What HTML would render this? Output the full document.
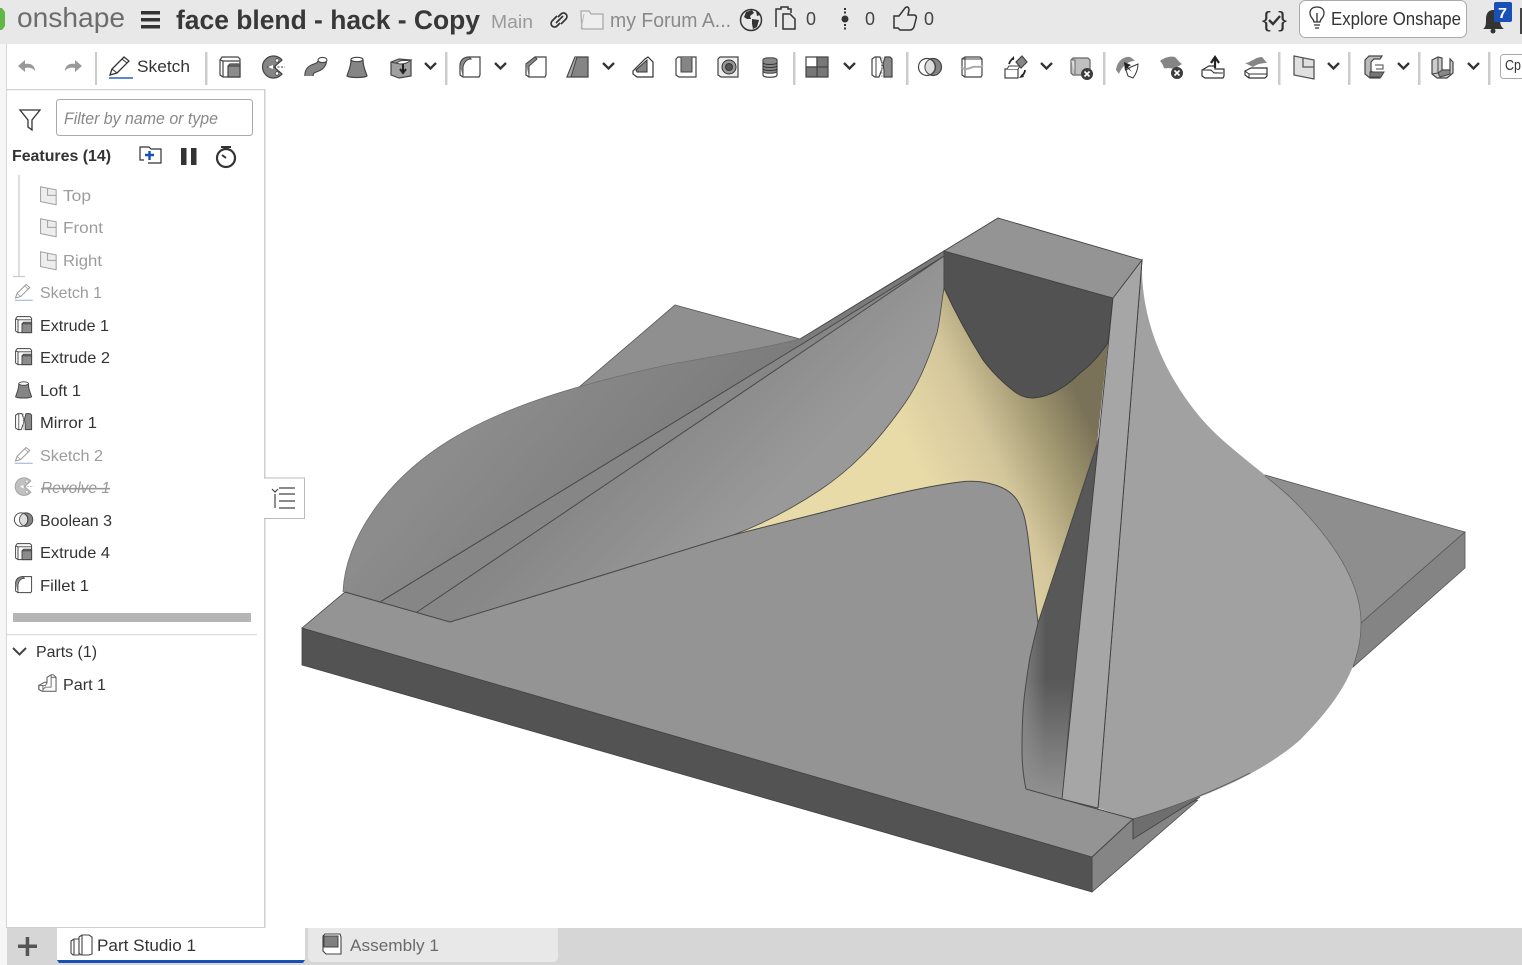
<!DOCTYPE html>
<html><head><meta charset="utf-8"><title>face blend - hack - Copy</title>
<style>
html,body{margin:0;padding:0;background:#fff;width:1522px;height:965px;overflow:hidden}
svg{display:block}
text{font-family:"Liberation Sans",sans-serif;fill:#333}
.t{font-size:16px}
.d{fill:#9c9c9c}
</style></head><body>
<svg width="1522" height="965" viewBox="0 0 1522 965" xmlns="http://www.w3.org/2000/svg">
<defs>
<linearGradient id="yl" gradientUnits="userSpaceOnUse" x1="925" y1="480" x2="1082" y2="405"><stop offset="0" stop-color="#e8dba8"/><stop offset=".42" stop-color="#d3c69b"/><stop offset=".75" stop-color="#a0966f"/><stop offset="1" stop-color="#7a7258"/></linearGradient>
<linearGradient id="ld" gradientUnits="userSpaceOnUse" x1="480" y1="420" x2="640" y2="560"><stop offset="0" stop-color="#8c8c8c"/><stop offset="1" stop-color="#7a7a7a"/></linearGradient>
<linearGradient id="li" gradientUnits="userSpaceOnUse" x1="640" y1="430" x2="740" y2="530"><stop offset="0" stop-color="#878787"/><stop offset="1" stop-color="#999"/></linearGradient>
<linearGradient id="wd" gradientUnits="userSpaceOnUse" x1="1022" y1="0" x2="1046" y2="0"><stop offset="0" stop-color="#808080"/><stop offset="1" stop-color="#585858"/></linearGradient>
<linearGradient id="wd2" gradientUnits="userSpaceOnUse" x1="1050" y1="680" x2="1050" y2="795"><stop offset="0" stop-color="#909090" stop-opacity="0"/><stop offset="1" stop-color="#909090"/></linearGradient>
<g id="ext" fill="#fff" stroke="#444" stroke-width="1.2"><path d="M2 5l2-3h16l2 2v18H5l-3-2z"/><path d="M5 22V6L2 5M5 6h17" fill="none"/><path d="M10 11l2-2h10v13H10z" fill="#8c8c8c"/><path d="M10 11h12" fill="none"/></g>
<g id="rev"><path d="M21 5a11 11 0 1 0 0 14l-8-7z" fill="#858585" stroke="#444" stroke-width="1.200"/><circle cx="16" cy="5.500" r="1.800" fill="#fff" stroke="#444" stroke-width=".8"/><circle cx="16" cy="18.500" r="1.800" fill="#fff" stroke="#444" stroke-width=".8"/><path d="M6 12h18" stroke="#444" stroke-width="1" stroke-dasharray="2 1.500"/><path d="M7 12l5-2v4z" fill="#fff"/></g>
<g id="swp"><path d="M5 21C5 10 16 16 18.500 6" fill="none" stroke="#444" stroke-width="9.500"/><path d="M5 21C5 10 16 16 18.500 6" fill="none" stroke="#858585" stroke-width="7.300"/><ellipse cx="18.500" cy="5" rx="4.500" ry="2.600" fill="#fff" stroke="#444" stroke-width="1.100"/></g>
<g id="lof"><path d="M6 5C6 12 3 17 2 21c3 2 17 2 20 0-1-4-4-9-4-16z" fill="#858585" stroke="#444" stroke-width="1.200"/><ellipse cx="12" cy="4.500" rx="6" ry="2.200" fill="#fff" stroke="#444" stroke-width="1.100"/></g>
<g id="thk"><path d="M2 7l8-3 12 1v16l-12 2-8-3z" fill="#a0a0a0" stroke="#444" stroke-width="1.200"/><path d="M2 7c5 2 7 0 9-1 3-1 7 0 11-1-3 3-6 4-11 4z" fill="#fff" stroke="#444"/><path d="M14 9v8m-3-3l3 4 3-4" stroke="#222" stroke-width="2" fill="none"/></g>
<g id="fil"><path d="M2 11c0-6 4-9 9-9h11v18l-1 2H5l-3-2z" fill="#fff" stroke="#444" stroke-width="1.200"/><path d="M2 11c0-6 4-9 9-9l2 2c-4 0-7 3-8 8v10" fill="#8c8c8c" stroke="#444"/></g>
<g id="chm"><path d="M2 9l9-7h11v18l-1 2H5l-3-2z" fill="#fff" stroke="#444" stroke-width="1.200"/><path d="M2 9l9-7 2 2-8 7v11" fill="#8c8c8c" stroke="#444"/></g>
<g id="drf"><path d="M9 2h13v20H1z" fill="#858585" stroke="#444" stroke-width="1.200"/><path d="M9 2L1 22l4 0L11 2" fill="#aaa" stroke="#444"/></g>
<g id="rib"><path d="M2 16l12-12 3-2 5 5v15H6l-4-3z" fill="#fff" stroke="#333" stroke-width="1.200"/><path d="M5 15L16 5v12H6z" fill="#858585" stroke="#333"/></g>
<g id="shl"><path d="M2 4l2-2h18v20H5l-3-2z" fill="#fff" stroke="#444" stroke-width="1.200"/><path d="M7 2v15h11V2" fill="#858585" stroke="#444"/></g>
<g id="hol"><path d="M2 4l2-2h18v20H5l-3-2z" fill="#eee" stroke="#444" stroke-width="1.200"/><circle cx="13" cy="12" r="7" fill="#999" stroke="#333"/><circle cx="13" cy="12" r="3.500" fill="#555" stroke="#333"/></g>
<g id="thr"><path d="M5 5v15c0 3 14 3 14 0V5z" fill="#fff" stroke="#444" stroke-width="1.200"/><path d="M5 5c0-3 14-3 14 0v11c0 3-14 3-14 0z" fill="#888" stroke="#444"/><path d="M5 8c2 2 12 2 14 0M5 11c2 2 12 2 14 0M5 14c2 2 12 2 14 0" stroke="#333" fill="none"/></g>
<g id="pat"><path d="M1 2h11v10H1z" fill="#fff" stroke="#444" stroke-width="1.200"/><path d="M12 2h11v10H12zM1 12h11v10H1zM12 12h11v10H12z" fill="#777" stroke="#444" stroke-width="1.200"/></g>
<g id="mir"><path d="M2 4l3-2h5l2 6v6l-3 8H5l-3-2z" fill="#fff" stroke="#444" stroke-width="1.200"/><path d="M13 9l2-7h5l2 2v18h-8v-7z" fill="#8a8a8a" stroke="#444" stroke-width="1.200"/><path d="M12 2v20" stroke="#aaa" stroke-dasharray="2 1"/><path d="M6 2v20" stroke="#444" fill="none"/></g>
<g id="bol"><circle cx="15" cy="12" r="8.500" fill="#858585" stroke="#444" stroke-width="1.200"/><circle cx="9" cy="12" r="8.500" fill="#fff" stroke="#444" stroke-width="1.200"/><path d="M12 4.200a8.500 8.500 0 0 1 0 15.600a8.500 8.500 0 0 1 0-15.600z" fill="#ddd" stroke="#444"/></g>
<g id="spl"><path d="M2 4l3-2h15l2 2v16l-1 2H5l-3-2z" fill="#fff" stroke="#444" stroke-width="1.200"/><path d="M5 2v20M2 4h20" stroke="#444" fill="none"/><path d="M1 12c5 4 8 1 12 0 3-1 6 1 10-1" stroke="#aaa" stroke-width="2" fill="none"/></g>
<g id="trf"><path d="M2 14h13v9H2z" fill="#fff" stroke="#444" stroke-width="1.200"/><path d="M4 14l2-3h11l-2 3" fill="#fff" stroke="#444"/><path d="M13 7l6-6 5 6-6 6z" fill="#858585" stroke="#444" stroke-width="1.200"/><path d="M6 9c1-3 3-5 5-6M22 15c0 3-2 5-4 7" stroke="#222" stroke-width="1.800" fill="none"/><path d="M11 1l0 4-3-1zM16 23l5-1-2-3z" fill="#222"/></g>
<g id="del"><path d="M2 4l2-2h15l2 2v15H4l-2-2z" fill="#c0c0c0" stroke="#666" stroke-width="1.200"/><path d="M2 4h4v14" fill="#ddd" stroke="#666"/><circle cx="18" cy="18" r="6" fill="#3c3c3c"/><path d="M15.500 15.500l5 5m0-5l-5 5" stroke="#fff" stroke-width="1.600"/></g>
<g id="mvf"><path d="M1 15C2 6 9 1 15 2c2 1 4 3 5 4-7 0-13 5-16 13z" fill="#8a8a8a"/><path d="M13 21l-2-6 5-3 7-3c0 5-2 10-5 14z" fill="#fff" stroke="#333"/><path d="M9 7l1 9 2-3 5 4-4-5 3-2z" fill="#222"/></g>
<g id="dlf"><path d="M1 6c5-4 11-5 15-4 2 2 4 5 7 7l-8 5C10 12 6 14 5 13 4 10 3 8 1 6z" fill="#858585"/><circle cx="18" cy="18" r="6" fill="#3c3c3c"/><path d="M15.500 15.500l5 5m0-5l-5 5" stroke="#fff" stroke-width="1.600"/></g>
<g id="rpl"><path d="M1 15l7-4h6v3h9v7l-1 2H4l-3-2z" fill="#fff" stroke="#333" stroke-width="1.200"/><path d="M2 15h8l3 3h9" stroke="#333" fill="#bbb"/><path d="M14 13V4m-4 4l4-6 4 6" stroke="#222" stroke-width="2.200" fill="none"/></g>
<g id="ofs"><path d="M1 8c4 0 5-2 8-3 3-2 6-3 9-3l5 6c-5 0-10 1-14 4z" fill="#858585"/><path d="M1 16l6-3h16v8l-2 2H5l-4-3z" fill="#fff" stroke="#333" stroke-width="1.200"/><path d="M1 16l4 3h18M5 19v4" stroke="#333" fill="none"/></g>
<g id="pln"><path d="M2 1l20 4v19L2 20z" fill="#e0e0e0" stroke="#555" stroke-width="1.300"/><path d="M11 3v9h11" stroke="#555" stroke-width="1.300" fill="none"/></g>
<g id="cs"><path d="M4 5l4-4h13l-2 3h-6l-3 3v9l3 2h8l-2 5H9l-5-4z" fill="#bbb" stroke="#444" stroke-width="1.200"/><path d="M14 10h8v4h-7" fill="#fff" stroke="#444"/><path d="M9 22v-5h14l-3 5z" fill="#777" stroke="#444"/></g>
<g id="shm"><path d="M2 5l6-3 4 1v12h8V4l3 3v11l-6 5H7l-5-4z" fill="#ccc" stroke="#444" stroke-width="1.200"/><path d="M8 2v16l-6 1M8 18h12" stroke="#444" fill="none"/><path d="M12 15l-4 3 2 4 10-3v-4z" fill="#888" stroke="#444"/></g>
<g id="prt"><path d="M1 14l7-4h3V4l5-3h3l3 3v17H5l-4-2z" fill="#fff" stroke="#555" stroke-width="1.200"/><path d="M1 14h8l2-3V4M16 1v3h6M16 4v12H9l-3 3M1 14v5M6 14v7" stroke="#555" fill="none"/></g>
<g id="skt"><path d="M1 23h24" stroke="#2a62bd" stroke-width="1.400"/><path d="M2 20l2-6L16 2l5 4-12 12z" fill="#fff" stroke="#333" stroke-width="1.300"/><path d="M14 4l5 4M4 14l5 4" stroke="#333" fill="none"/></g>
<path id="chv" d="M0 0l5.500 5.500L11 0" fill="none" stroke="#333" stroke-width="2.300"/>
</defs>

<!-- header -->
<rect x="0" y="0" width="1522" height="44" fill="#e8e8e8"/>
<path d="M0 8h2l3 4v14l-3 4H0z" fill="#62b746"/>
<text x="17" y="27" font-size="28" textLength="108" lengthAdjust="spacingAndGlyphs" style="fill:#6d6d6d">onshape</text>
<path d="M141 11h19v3.500h-19zM141 18h19v3.500h-19zM141 25h19v3.500h-19z" fill="#333"/>
<text x="176" y="29" font-size="27" font-weight="700" textLength="304" lengthAdjust="spacingAndGlyphs" style="fill:#383838">face blend - hack - Copy</text>
<text x="491" y="28" font-size="18" textLength="42" lengthAdjust="spacingAndGlyphs" style="fill:#9a9a9a">Main</text>
<g fill="none" stroke="#333" stroke-width="1.700"><path d="M557 16l-5 5c-3 4 2 8 5 5l3-3"/><path d="M561 24l5-5c3-4-2-8-5-5l-3 3"/><path d="M556 23l7-7"/></g>
<path d="M581 14v-3h8l2 3h12v15h-21z" fill="#eee" stroke="#aaa" stroke-width="1.300"/>
<path d="M581 29l3-15" stroke="#bbb" fill="none"/>
<text x="610" y="27" font-size="20" textLength="121" lengthAdjust="spacingAndGlyphs" style="fill:#8a8a8a">my Forum A...</text>
<circle cx="751" cy="20" r="10.500" fill="#e8e8e8" stroke="#333" stroke-width="1.500"/>
<path d="M746 12l6-2 2 3-4 3 1 3-4 0-3-2zM752 19l7 1-2 7-4 2-1-5zM756 11l4 4-3 1z" fill="#333"/>
<path d="M776 27V9h5l0-2h7v2h3l0 4" fill="none" stroke="#333" stroke-width="1.500"/>
<path d="M783 14h7l5 5v10h-12z" fill="#e8e8e8" stroke="#333" stroke-width="1.500"/>
<text x="806" y="25" font-size="18" textLength="10" lengthAdjust="spacingAndGlyphs" style="fill:#444">0</text>
<circle cx="845" cy="19" r="3.500" fill="#333"/>
<path d="M845 8v6M845 24v6" stroke="#333" stroke-width="2" stroke-dasharray="2 1.500"/>
<text x="865" y="25" font-size="18" textLength="10" lengthAdjust="spacingAndGlyphs" style="fill:#444">0</text>
<path d="M894 28V16h5l6-8c2-2 4-1 4 2l-1 5h6c2 0 3 2 2 4l-2 8c-1 2-2 3-4 3h-10l-2-2z" fill="none" stroke="#333" stroke-width="1.500"/>
<text x="924" y="25" font-size="18" textLength="10" lengthAdjust="spacingAndGlyphs" style="fill:#444">0</text>
<text x="1262" y="27" font-size="22" textLength="25" lengthAdjust="spacingAndGlyphs" style="fill:#333">{&#160;}</text>
<path d="M1269 20l4 4 7-8" fill="none" stroke="#333" stroke-width="2.400"/>
<rect x="1299.500" y="0.500" width="167" height="37" rx="6" fill="#fff" stroke="#aaa"/>
<path d="M1314 22c0-3-4-4-4-9 0-4 3-6 7-6s7 2 7 6c0 5-4 6-4 9zM1314 25h6M1315 28h4M1317 22v-9" fill="none" stroke="#333" stroke-width="1.300"/>
<text x="1331" y="25" font-size="18" textLength="130" lengthAdjust="spacingAndGlyphs" style="fill:#333">Explore Onshape</text>
<path d="M1483 29c3-2 3-5 3-10 0-6 3-9 7-9s7 3 7 9c0 5 1 8 4 10z" fill="#333"/><circle cx="1493" cy="31" r="2.500" fill="#333"/>
<rect x="1494" y="2" width="18" height="20" rx="2" fill="#1a50b5"/>
<text x="1498" y="18" font-size="15" font-weight="700" textLength="9" lengthAdjust="spacingAndGlyphs" style="fill:#fff">7</text>
<rect x="1520" y="8" width="2" height="26" fill="#444"/>

<!-- left strip -->
<rect x="0" y="44" width="6" height="884" fill="#f6f6f6"/>
<rect x="6" y="44" width="1" height="884" fill="#d5d5d5"/>

<!-- toolbar -->
<path d="M35 71c0-6-5-8-10-7v-4l-7 6 7 6v-4c4-1 8 0 10 3z" fill="#999"/>
<path d="M65 71c0-6 5-8 10-7v-4l7 6-7 6v-4c-4-1-8 0-10 3z" fill="#999"/>
<g fill="#ccc"><rect x="95" y="52" width="2" height="33"/><rect x="205" y="52" width="2.500" height="33"/><rect x="445" y="52" width="2.500" height="33"/><rect x="793" y="52" width="2.500" height="33"/><rect x="906" y="52" width="2.500" height="33"/><rect x="1103" y="52" width="2.500" height="33"/><rect x="1278" y="52" width="2.500" height="33"/><rect x="1348" y="52" width="2.500" height="33"/><rect x="1418" y="52" width="2.500" height="33"/><rect x="1488" y="52" width="2.500" height="33"/></g>
<use href="#skt" transform="translate(108 55)"/>
<text x="137" y="72" font-size="17" textLength="53" lengthAdjust="spacingAndGlyphs">Sketch</text>
<use href="#ext" transform="translate(218 55)"/>
<use href="#rev" transform="translate(261 55)"/>
<use href="#swp" transform="translate(304 55)"/>
<use href="#lof" transform="translate(345 55)"/>
<use href="#thk" transform="translate(389 55)"/>
<use href="#chv" transform="translate(425 63)"/>
<use href="#fil" transform="translate(458 55)"/>
<use href="#chv" transform="translate(495 63)"/>
<use href="#chm" transform="translate(524 55)"/>
<use href="#drf" transform="translate(566 55)"/>
<use href="#chv" transform="translate(603 63)"/>
<use href="#rib" transform="translate(631 55)"/>
<use href="#shl" transform="translate(674 55)"/>
<use href="#hol" transform="translate(716 55)"/>
<use href="#thr" transform="translate(758 55)"/>
<use href="#pat" transform="translate(805 55)"/>
<use href="#chv" transform="translate(844 63)"/>
<use href="#mir" transform="translate(870 55)"/>
<use href="#bol" transform="translate(918 55)"/>
<use href="#spl" transform="translate(960 55)"/>
<use href="#trf" transform="translate(1003 55)"/>
<use href="#chv" transform="translate(1041 63)"/>
<use href="#del" transform="translate(1069 56)"/>
<use href="#mvf" transform="translate(1115 55)"/>
<use href="#dlf" transform="translate(1159 55)"/>
<use href="#rpl" transform="translate(1201 55)"/>
<use href="#ofs" transform="translate(1244 55)"/>
<use href="#pln" transform="translate(1292 55)"/>
<use href="#chv" transform="translate(1328 63)"/>
<use href="#cs" transform="translate(1361 55)"/>
<use href="#chv" transform="translate(1398 63)"/>
<use href="#shm" transform="translate(1430 55)"/>
<use href="#chv" transform="translate(1468 63)"/>
<rect x="1500.500" y="54.500" width="30" height="24" rx="3" fill="#fff" stroke="#aaa"/>
<text x="1505" y="70" font-size="15" textLength="16" lengthAdjust="spacingAndGlyphs">Cp</text>

<!-- 3D model -->
<path d="M675 305L800 339 900 400 600 420 578 388z" fill="#8f8f8f" stroke="#555" stroke-width=".8"/>
<path d="M1265 475L1465 532 1361 623 1300 560z" fill="#8e8e8e" stroke="#555" stroke-width=".8"/>
<path d="M1361 623L1465 532V568L1353 667z" fill="#848484" stroke="#555" stroke-width=".8"/>
<path d="M1198 800L1092 892V857L1133 819z" fill="#858585" stroke="#4a4a4a" stroke-width=".8"/>
<path d="M1133 819L1200 797 1133 839z" fill="#6e6e6e" stroke="#444" stroke-width=".8"/>
<path d="M302 628L1092 857V892L302 665z" fill="#535353" stroke="#444" stroke-width=".8"/>
<path d="M302 628L345 592 450 622 733 535 1038 623 1022 750 1026 789 1133 819 1092 857z" fill="#949494" stroke="#444" stroke-width=".8"/>
<path d="M733 535L820 513C870 500 920 487 960 482C975 480 1005 482 1017 500C1025 512 1026 525 1028 537L1038 623 1000 640 800 600z" fill="#949494"/>
<!-- left dome -->
<path d="M343 592C345 540 385 480 450 440C510 403 590 382 667 365C710 357 755 350 800 339L944 251V288C941 306 940 320 937 333C925 370 915 390 900 410C875 445 850 470 820 490C790 510 760 525 733 535L450 622 345 592z" fill="url(#ld)"/>
<path d="M380 602L820 333 944 256 820 340 417 612z" fill="#868686"/>
<path d="M417 612L820 340 944 256V288C941 306 940 320 937 333C925 370 915 390 900 410C875 445 850 470 820 490C790 510 760 525 733 535L450 622z" fill="url(#li)"/>
<!-- yellow & dark -->
<path d="M944 288C941 306 940 320 937 333C925 370 915 390 900 410C875 445 850 470 820 490C790 510 760 525 733 535L820 513C870 500 920 487 960 482C975 480 1005 482 1017 500C1025 512 1026 525 1028 537L1038 623 1097 445 1108 343 1033 398 1000 380z" fill="url(#yl)"/>
<path d="M944 251L1113 298 1108 343C1098 357 1090 366 1080 373C1065 388 1050 397 1033 398C1022 398 1016 393 1010 388C1000 380 992 372 983 360C968 336 955 312 944 288z" fill="#525252" stroke="#3a3a3a" stroke-width=".9"/>
<path d="M1100 433L1062 799 1026 789C1023 775 1022 762 1022 750C1022 715 1023 700 1030 657C1032 645 1035 635 1038 623z" fill="url(#wd)"/>
<path d="M1072 680L1062 799 1026 789C1023 775 1022 762 1022 750C1022 725 1022 700 1025 680z" fill="url(#wd2)"/>
<!-- right dome -->
<path d="M1142 260C1140 320 1165 375 1200 417C1225 447 1265 472 1293 500C1330 537 1361 580 1361 623C1361 665 1340 700 1300 740C1260 775 1200 800 1133 819L1098 808z" fill="#a1a1a1"/>
<path d="M1142 260L1098 808" stroke="#3f3f3f" stroke-width="1" fill="none"/>
<path d="M1265 476C1275 484 1284 491 1293 500C1330 537 1361 580 1361 623C1361 640 1358 652 1353 667" fill="none" stroke="#606060" stroke-width=".7"/>
<path d="M1133 819C1172 808 1212 792 1250 773" fill="none" stroke="#555" stroke-width=".8"/>
<!-- column + top -->
<path d="M1113 298L1142 260 1098 808 1062 799z" fill="#a6a6a6" stroke="#3f3f3f" stroke-width=".9"/>
<path d="M944 251L998 218 1142 260 1113 298z" fill="#949494" stroke="#444" stroke-width=".9"/>
<!-- edges -->
<g fill="none" stroke="#484848" stroke-width="1">
<path d="M343 592C345 540 385 480 450 440C510 403 590 382 667 365C710 357 755 350 800 339" stroke="#707070" stroke-width=".8"/>
<path d="M380 602L820 333 944 256"/>
<path d="M417 612L820 340 944 256"/>
<path d="M800 339L944 251V288"/>
<path d="M345 592L450 622 733 535"/>
<path d="M944 288C941 306 940 320 937 333C925 370 915 390 900 410C875 445 850 470 820 490C790 510 760 525 733 535" stroke-width=".8"/>
<path d="M733 535L820 513C870 500 920 487 960 482C975 480 1005 482 1017 500C1025 512 1026 525 1028 537L1038 623 1097 445"/>
<path d="M1038 623L1030 657C1023 700 1022 715 1022 750C1022 762 1023 775 1026 789L1133 819 1092 857"/>
<path d="M1133 819V839"/>
<path d="M1092 857V892"/>
</g>

<!-- panel -->
<rect x="264" y="89" width="1.500" height="839" fill="#cfcfcf"/>
<rect x="6" y="89" width="259" height="1.200" fill="#d0d0d0"/>
<rect x="6" y="927" width="259" height="1.200" fill="#d0d0d0"/>
<path d="M20 110h20l-8 10v10l-4 -3v-7z" fill="#fff" stroke="#333" stroke-width="1.300"/>
<rect x="56.500" y="99.500" width="196" height="36" rx="3" fill="#fff" stroke="#aaa"/>
<text x="64" y="124" font-size="16.500" font-style="italic" textLength="154" lengthAdjust="spacingAndGlyphs" style="fill:#888">Filter by name or type</text>
<text x="12" y="161" font-size="16" font-weight="700" textLength="99" lengthAdjust="spacingAndGlyphs">Features (14)</text>
<path d="M144 160h-4v-13h9l2 2h10v14h-13" fill="none" stroke="#333" stroke-width="1.200"/>
<path d="M145 155h9M149.500 151v9" stroke="#1a50b5" stroke-width="2.400"/>
<rect x="181" y="148" width="5.500" height="17" fill="#333"/><rect x="191" y="148" width="5.500" height="17" fill="#333"/>
<circle cx="226" cy="158" r="9" fill="#fff" stroke="#333" stroke-width="2.200"/>
<path d="M221 147h10M226 147v3M226 158l-4-3" stroke="#333" stroke-width="2" fill="none"/>

<path d="M19 175V276M13 276.500H25" stroke="#ccc" stroke-width="1.300" fill="none"/>

<g opacity=".55"><use href="#pln" transform="translate(39 186) scale(.78)"/><use href="#pln" transform="translate(39 218) scale(.78)"/><use href="#pln" transform="translate(39 251) scale(.78)"/></g>
<text class="t d" x="63" y="201" textLength="28" lengthAdjust="spacingAndGlyphs">Top</text>
<text class="t d" x="63" y="233" textLength="40" lengthAdjust="spacingAndGlyphs">Front</text>
<text class="t d" x="63" y="266" textLength="39" lengthAdjust="spacingAndGlyphs">Right</text>
<g opacity=".5"><use href="#skt" transform="translate(14 283) scale(.75)"/></g>
<text class="t d" x="40" y="298" textLength="62" lengthAdjust="spacingAndGlyphs">Sketch 1</text>
<use href="#ext" transform="translate(14 315) scale(.8)"/>
<text class="t" x="40" y="331" textLength="69" lengthAdjust="spacingAndGlyphs">Extrude 1</text>
<use href="#ext" transform="translate(14 347) scale(.8)"/>
<text class="t" x="40" y="363" textLength="70" lengthAdjust="spacingAndGlyphs">Extrude 2</text>
<use href="#lof" transform="translate(14 380) scale(.8)"/>
<text class="t" x="40" y="396" textLength="41" lengthAdjust="spacingAndGlyphs">Loft 1</text>
<use href="#mir" transform="translate(14 412) scale(.8)"/>
<text class="t" x="40" y="428" textLength="57" lengthAdjust="spacingAndGlyphs">Mirror 1</text>
<g opacity=".5"><use href="#skt" transform="translate(14 446) scale(.75)"/></g>
<text class="t d" x="40" y="461" textLength="63" lengthAdjust="spacingAndGlyphs">Sketch 2</text>
<g opacity=".5"><use href="#rev" transform="translate(14 477) scale(.8)"/></g>
<text class="t" x="41" y="493" font-style="italic" textLength="69" lengthAdjust="spacingAndGlyphs" text-decoration="line-through" style="fill:#999">Revolve 1</text>
<use href="#bol" transform="translate(14 510) scale(.8)"/>
<text class="t" x="40" y="526" textLength="72" lengthAdjust="spacingAndGlyphs">Boolean 3</text>
<use href="#ext" transform="translate(14 542) scale(.8)"/>
<text class="t" x="40" y="558" textLength="70" lengthAdjust="spacingAndGlyphs">Extrude 4</text>
<use href="#fil" transform="translate(14 575) scale(.8)"/>
<text class="t" x="40" y="591" textLength="49" lengthAdjust="spacingAndGlyphs">Fillet 1</text>
<rect x="13" y="613" width="238" height="9" fill="#b5b5b5"/>
<rect x="7" y="634" width="250" height="1.200" fill="#dcdcdc"/>
<path d="M13 648l6.500 6.500 6.500-6.500" fill="none" stroke="#444" stroke-width="2"/>
<text class="t" x="36" y="657" textLength="61" lengthAdjust="spacingAndGlyphs">Parts (1)</text>
<use href="#prt" transform="translate(38 674) scale(.82)"/>
<text class="t" x="63" y="690" textLength="43" lengthAdjust="spacingAndGlyphs">Part 1</text>

<!-- list toggle -->
<path d="M264 478h40.500v40.500H264" fill="#fff" stroke="#bbb"/>
<rect x="264" y="479" width="2" height="39" fill="#fff"/>
<path d="M272 489l3 3 3-3M275 494v14M279 488h16M279 494h16M279 501h16M279 508h16" fill="none" stroke="#444" stroke-width="1.200"/>

<!-- bottom tabs -->
<rect x="7" y="928" width="1515" height="37" fill="#d6d6d6"/>
<rect x="0" y="928" width="7" height="37" fill="#f6f6f6"/>
<path d="M18 944.500h19v3.500H18zM25.700 937h3.500v19h-3.500z" fill="#555"/>
<path d="M57 928h248v30a5 5 0 0 1-5 5H62a5 5 0 0 1-5-5z" fill="#fff"/>
<path d="M57 960h248l-2 3H59z" fill="#1a50b5"/>
<g fill="#fff" stroke="#444" stroke-width="1.100"><path d="M71 941l3-2h5v16h-6l-2-2z"/><path d="M79 937l3-2h7l3 2v17l-3 1h-8l-2-2z"/><path d="M74 939v16M82 935v20"/></g>
<text x="97" y="951" font-size="17" textLength="99" lengthAdjust="spacingAndGlyphs">Part Studio 1</text>
<path d="M308 928h250v29a5 5 0 0 1-5 5H313a5 5 0 0 1-5-5z" fill="#e8e8e8"/>
<path d="M323 936l2-2h15l1 3v17h-15l-3-3z" fill="#fff" stroke="#444" stroke-width="1.100"/>
<path d="M324 936h14v11h-14z" fill="#808080" stroke="#444"/>
<text x="350" y="951" font-size="17" textLength="89" lengthAdjust="spacingAndGlyphs" style="fill:#6a6a6a">Assembly 1</text>
</svg>
</body></html>
